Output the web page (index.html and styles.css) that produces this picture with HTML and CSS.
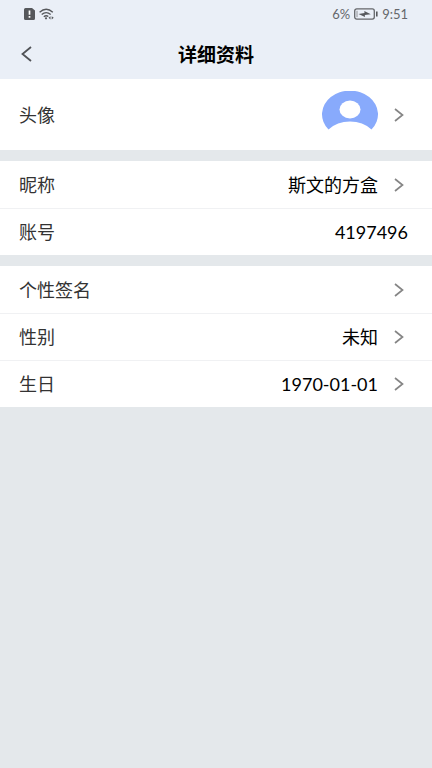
FILE: index.html
```html
<!DOCTYPE html>
<html lang="zh-CN">
<head>
<meta charset="utf-8">
<meta name="viewport" content="width=device-width, initial-scale=1">
<title>详细资料</title>
<link rel="stylesheet" href="styles.css">
</head>
<body>
<svg class="symbols" aria-hidden="true">
  <symbol id="chevron" viewBox="0 0 10 14"><path d="M1 1l7.500 6L1 13" fill="none" stroke="currentColor" stroke-width="1.700"/></symbol>
</svg>
<header class="header">
  <div class="status">
    <div class="status-group">
      <svg width="11" height="12" viewBox="0 0 11 12" aria-hidden="true">
        <path d="M1.500 0H8l3 2.500v8a1.500 1.500 0 0 1-1.500 1.500h-8A1.500 1.500 0 0 1 0 10.500v-9A1.500 1.500 0 0 1 1.500 0z" fill="#56585c"/>
        <path d="M5.500 2.500v4.200M5.500 8v1.700" stroke="#fff" stroke-width="1.700"/>
      </svg>
      <svg width="15" height="12" viewBox="0 0 15 12" aria-hidden="true">
        <g fill="none" stroke="#56585c" stroke-width="1.400">
          <path d="M.6 4.200Q7.200-1.500 13.800 4.200M2.700 6.500q4.500-3.700 9 0M4.800 8.700q2.400-1.900 4.500-.2"/>
        </g>
        <circle cx="7" cy="10.300" r="1.100" fill="#56585c"/>
        <path d="M9.500 9.800l2-1.600v3.200zM14.700 9.800l-2-1.600v3.200z" fill="#56585c"/>
      </svg>
    </div>
    <div class="status-group">
      <span>6%</span>
      <svg width="24" height="12" viewBox="0 0 24 12" aria-hidden="true">
        <rect x=".7" y=".9" width="19.600" height="10.200" rx="2" fill="none" stroke="#65676b" stroke-width="1.300"/>
        <path d="M3 2.800v6.400" stroke="#909296" stroke-width="1"/>
        <path d="M4.500 5.900l6-.9-.2-2 6.500 3.200-6 .7.200 2z" fill="#56585c"/>
        <path d="M22.800 3.500v5" stroke="#56585c" stroke-width="1.600"/>
      </svg>
      <span class="clock">9:51</span>
    </div>
  </div>
  <nav class="nav">
    <button class="back" type="button" aria-label="返回">
      <svg width="11" height="16" viewBox="0 0 11 16" aria-hidden="true"><path d="M10 1L1.500 8l8.500 7" fill="none" stroke="currentColor" stroke-width="1.800"/></svg>
    </button>
    <h1 class="title">详细资料</h1>
  </nav>
</header>
<main class="groups">
  <section class="group">
    <button class="row row-avatar" type="button">
      <span class="label">头像</span>
      <svg class="avatar" width="56" height="48" viewBox="0 0 56 48" aria-hidden="true">
        <path d="M6.500 38.500A28 23.700 0 1 1 49.500 38.500Q41 30.500 28 30.500T6.500 38.500z" fill="#88aafc"/>
        <ellipse cx="28" cy="18.500" rx="10.500" ry="9" fill="#fff"/>
      </svg>
      <svg class="chevron" aria-hidden="true"><use href="#chevron"/></svg>
    </button>
  </section>
  <section class="group">
    <button class="row" type="button">
      <span class="label">昵称</span><span class="value">斯文的方盒</span>
      <svg class="chevron" aria-hidden="true"><use href="#chevron"/></svg>
    </button>
    <div class="row">
      <span class="label">账号</span><span class="value">4197496</span>
    </div>
  </section>
  <section class="group">
    <button class="row" type="button">
      <span class="label">个性签名</span>
      <svg class="chevron" aria-hidden="true"><use href="#chevron"/></svg>
    </button>
    <button class="row" type="button">
      <span class="label">性别</span><span class="value">未知</span>
      <svg class="chevron" aria-hidden="true"><use href="#chevron"/></svg>
    </button>
    <button class="row" type="button">
      <span class="label">生日</span><span class="value">1970-01-01</span>
      <svg class="chevron" aria-hidden="true"><use href="#chevron"/></svg>
    </button>
  </section>
</main>
</body>
</html>
```
FILE: styles.css
```css
* {
  box-sizing: border-box;
}

body {
  margin: 0;
  min-height: 100vh;
  background: #e4e8eb;
  color: #000;
  font-family: Lato, "Noto Sans CJK SC", sans-serif;
}

.symbols {
  position: absolute;
  width: 0;
  height: 0;
}

.header {
  background: #eaeff7;
}

.status {
  display: flex;
  align-items: center;
  justify-content: space-between;
  height: 28px;
  padding: 0 24px;
  color: #65676b;
  font-size: 13px;
}

.status-group {
  display: flex;
  align-items: center;
  gap: 4px;
}

.nav {
  display: grid;
  grid-template-columns: 52px 1fr 52px;
  align-items: center;
  height: 51px;
}

.back {
  display: flex;
  align-items: center;
  height: 100%;
  padding: 0 0 0 21px;
  border: 0;
  background: none;
  color: #505256;
}

.title {
  margin: 0;
  padding-top: 2px;
  font-size: 19px;
  font-weight: 700;
  line-height: 28px;
  text-align: center;
}

.groups {
  display: flex;
  flex-direction: column;
  gap: 11px;
}

.group {
  background: #fff;
}

.row {
  display: flex;
  align-items: center;
  width: 100%;
  min-height: 47px;
  padding: 0 24px 0 19px;
  border: 0;
  background: none;
  color: inherit;
  font: inherit;
  font-size: 18px;
  line-height: 26px;
  text-align: left;
}

.row + .row {
  border-top: 1px solid #f0f1f3;
}

.row-avatar {
  min-height: 71px;
}

.label {
  flex: 1;
  color: #333;
}

.chevron {
  width: 10px;
  height: 14px;
  margin: 0 4px 0 16px;
  color: #858585;
}
```
